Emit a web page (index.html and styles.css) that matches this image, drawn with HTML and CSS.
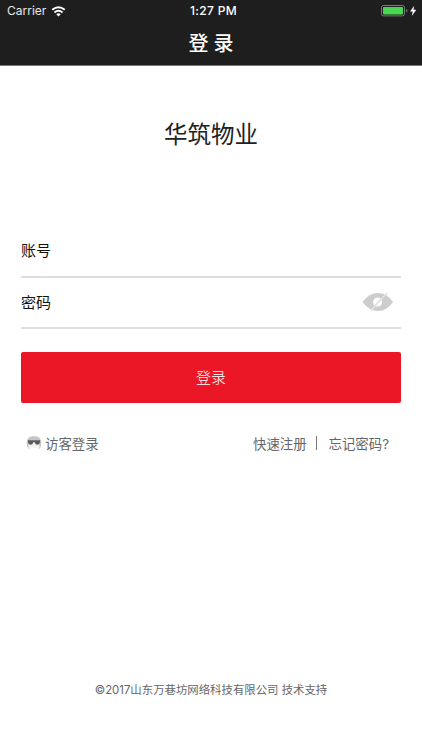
FILE: index.html
```
<!DOCTYPE html>
<html lang="zh-CN">
<head>
<meta charset="utf-8">
<title>登录</title>
<link rel="stylesheet" href="styles.css">
</head>
<body>
<header class="header">
  <div class="status">
    <div class="network"><span>Carrier</span>
      <svg width="15" height="11" viewBox="0 0 16 12"><g fill="none" stroke="#fff" stroke-width="2.1"><path d="M1.2 4.2Q8-1.5 14.8 4.2"/><path d="M3.6 7Q8 3.2 12.4 7"/></g><path fill="#fff" d="M5.6 9Q8 7 10.4 9L8 11.5Z"/></svg>
    </div>
    <span class="time">1:27 PM</span>
    <div class="power">
      <svg width="36" height="12" viewBox="0 0 36 12"><rect x=".5" y=".5" width="23" height="10.4" rx="2.2" fill="none" stroke="#777d78"/><rect x="2" y="2" width="20" height="7.5" rx="1" fill="#48d653"/><path d="M25 4v3.5q1.4-.5 1.4-1.75T25 4" fill="#777"/><path d="M33.2.7L29 6.5h2.7l-.9 4.6 4.5-6.3h-2.8z" fill="#fff"/></svg>
    </div>
  </div>
  <h1 class="title">登录</h1>
</header>
<main class="main">
  <h2 class="brand">华筑物业</h2>
  <div class="field account-field">账号</div>
  <div class="field">密码
    <svg class="eye" width="32" height="22" viewBox="0 0 32 22"><path d="M.5 11Q7 2 16 2t15 9q-6 9-15 9T.5 11" fill="#cdcdcd"/><circle cx="15.6" cy="11" r="4.6" fill="#fff"/><path d="M9 19.5L25.5 1.5" stroke="#e4e4e4" stroke-width="1.4"/><path d="M12.5 14.6l6-6.5" stroke="#e0e0e0" stroke-width="1"/></svg>
  </div>
  <button class="submit" type="button">登录</button>
  <nav class="links">
    <a class="guest"><svg width="16" height="16" viewBox="0 0 16 16"><path d="M3 14V5h10v9Q8 11 3 14" fill="#f3f3f3"/><path d="M2.5 14.5Q.6 12 .7 7.3 1.2 1 8 1t7.3 6.3q.1 4.7-1.8 7.2l-.5-8.7H3z" fill="#c6c6c6"/><path d="M1.8 5.2h12.4l-.4 2.8q-.5 1.8-2.5 1.8-2 0-2.6-2.6H7.3q-.6 2.6-2.6 2.6-2 0-2.5-1.8z" fill="#5b5b5b"/></svg><span>访客登录</span></a>
    <div class="account"><a>快速注册</a><i class="divider"></i><a>忘记密码?</a></div>
  </nav>
</main>
<footer class="footer">©2017山东万巷坊网络科技有限公司 技术支持</footer>
</body>
</html>
```
FILE: styles.css
```
* { box-sizing: border-box; }
body {
  margin: 0;
  height: 750px;
  display: flex;
  flex-direction: column;
  background: #fff;
  color: #222;
  font-family: Inter, "Noto Sans CJK SC", sans-serif;
  overflow: hidden;
}
.header {
  height: 66px;
  background: #1e1e1e;
  border-bottom: 1px solid #777;
  color: #fff;
}
.status {
  height: 22px;
  padding: 0 5px 0 7px;
  display: grid;
  grid-template-columns: 1fr auto 1fr;
  align-items: center;
  font-size: 12px;
  line-height: 22px;
}
.network { display: flex; align-items: center; gap: 5px; color: #e8e8e8; }
.time { padding-left: 2px; margin-right: -1px; font-weight: 500; letter-spacing: .3px; }
.power { display: flex; justify-content: flex-end; }
.title {
  margin: 0;
  height: 43px;
  font-size: 20px;
  font-weight: 500;
  line-height: 44px;
  letter-spacing: 5px;
  text-indent: 5px;
  text-align: center;
}
.main { padding: 0 21px; flex: 1; }
.brand {
  margin: 50px 0 74px;
  font-size: 23.5px;
  font-weight: 400;
  line-height: 38px;
  text-align: center;
}
.field {
  height: 51px;
  padding-bottom: 2px;
  border-bottom: 2px solid #dedede;
  display: flex;
  justify-content: space-between;
  align-items: center;
  color: #111;
  font-size: 15px;
}
.account-field { height: 50px; padding-bottom: 5px; }
.eye { margin-right: 7px; }
.submit {
  width: 100%;
  height: 51px;
  margin-top: 23px;
  padding: 0;
  display: block;
  border: 0;
  border-radius: 2px;
  background: #ec1726;
  color: #fff;
  font: 300 15px/51px Inter, "Noto Sans CJK SC", sans-serif;
}
.links {
  margin: 28px 12px 0 5px;
  height: 24px;
  display: flex;
  justify-content: space-between;
  align-items: center;
  color: #666;
  font-size: 13.4px;
}
.guest, .account { display: flex; align-items: center; }
.guest { gap: 3px; }
.divider { width: 1px; height: 14px; margin: 0 12px 0 9px; background: #777; }
.footer {
  height: 76px;
  color: #666;
  font-size: 11.4px;
  line-height: 32px;
  text-align: center;
}
```
